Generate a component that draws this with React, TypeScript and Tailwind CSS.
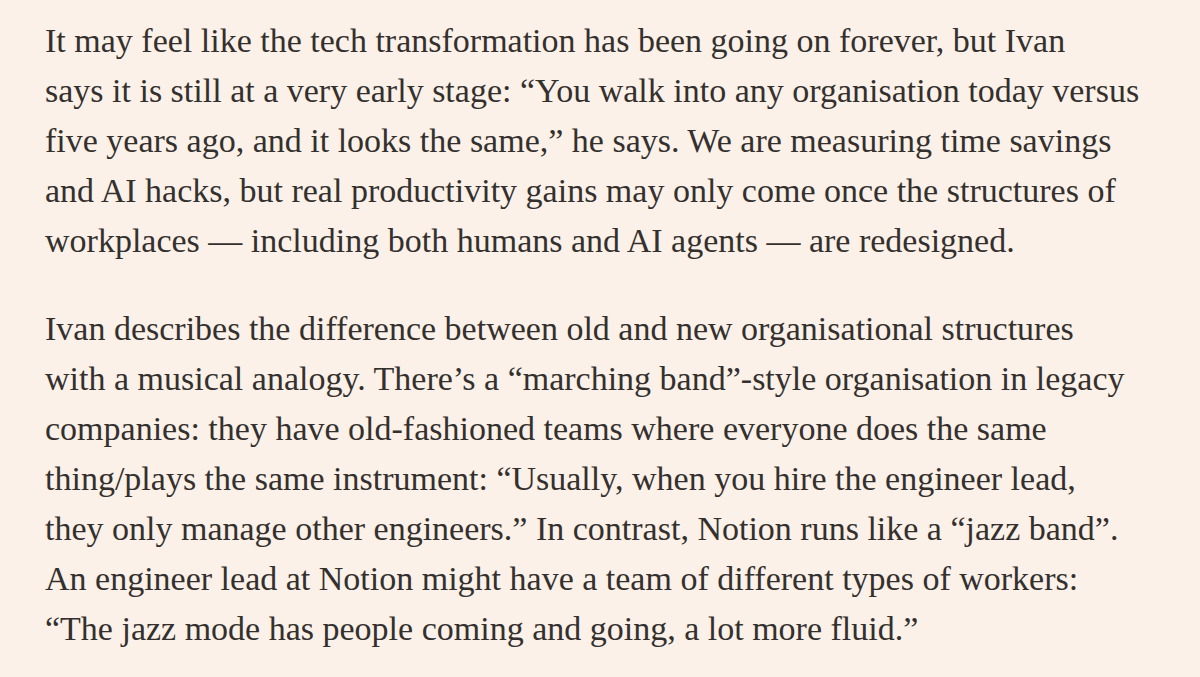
const paragraphs: string[][] = [
  [
    "It may feel like the tech transformation has been going on forever, but Ivan",
    "says it is still at a very early stage: “You walk into any organisation today versus",
    "five years ago, and it looks the same,” he says. We are measuring time savings",
    "and AI hacks, but real productivity gains may only come once the structures of",
    "workplaces — including both humans and AI agents — are redesigned.",
  ],
  [
    "Ivan describes the difference between old and new organisational structures",
    "with a musical analogy. There’s a “marching band”-style organisation in legacy",
    "companies: they have old-fashioned teams where everyone does the same",
    "thing/plays the same instrument: “Usually, when you hire the engineer lead,",
    "they only manage other engineers.” In contrast, Notion runs like a “jazz band”.",
    "An engineer lead at Notion might have a team of different types of workers:",
    "“The jazz mode has people coming and going, a lot more fluid.”",
  ],
];

export default function App() {
  return (
    <div className="min-h-[677px] w-full bg-[#fcf1e8] pl-[45px] pt-[16px] text-[#33302e]">
      <article className="flex flex-col gap-[38px] font-['Liberation_Serif',Georgia,serif] text-[34px] leading-[50px]">
        {paragraphs.map((lines, i) => (
          <p key={i}>
            {lines.map((line, j) => (
              <span key={j} className="block whitespace-nowrap">
                {line}
              </span>
            ))}
          </p>
        ))}
      </article>
    </div>
  );
}
